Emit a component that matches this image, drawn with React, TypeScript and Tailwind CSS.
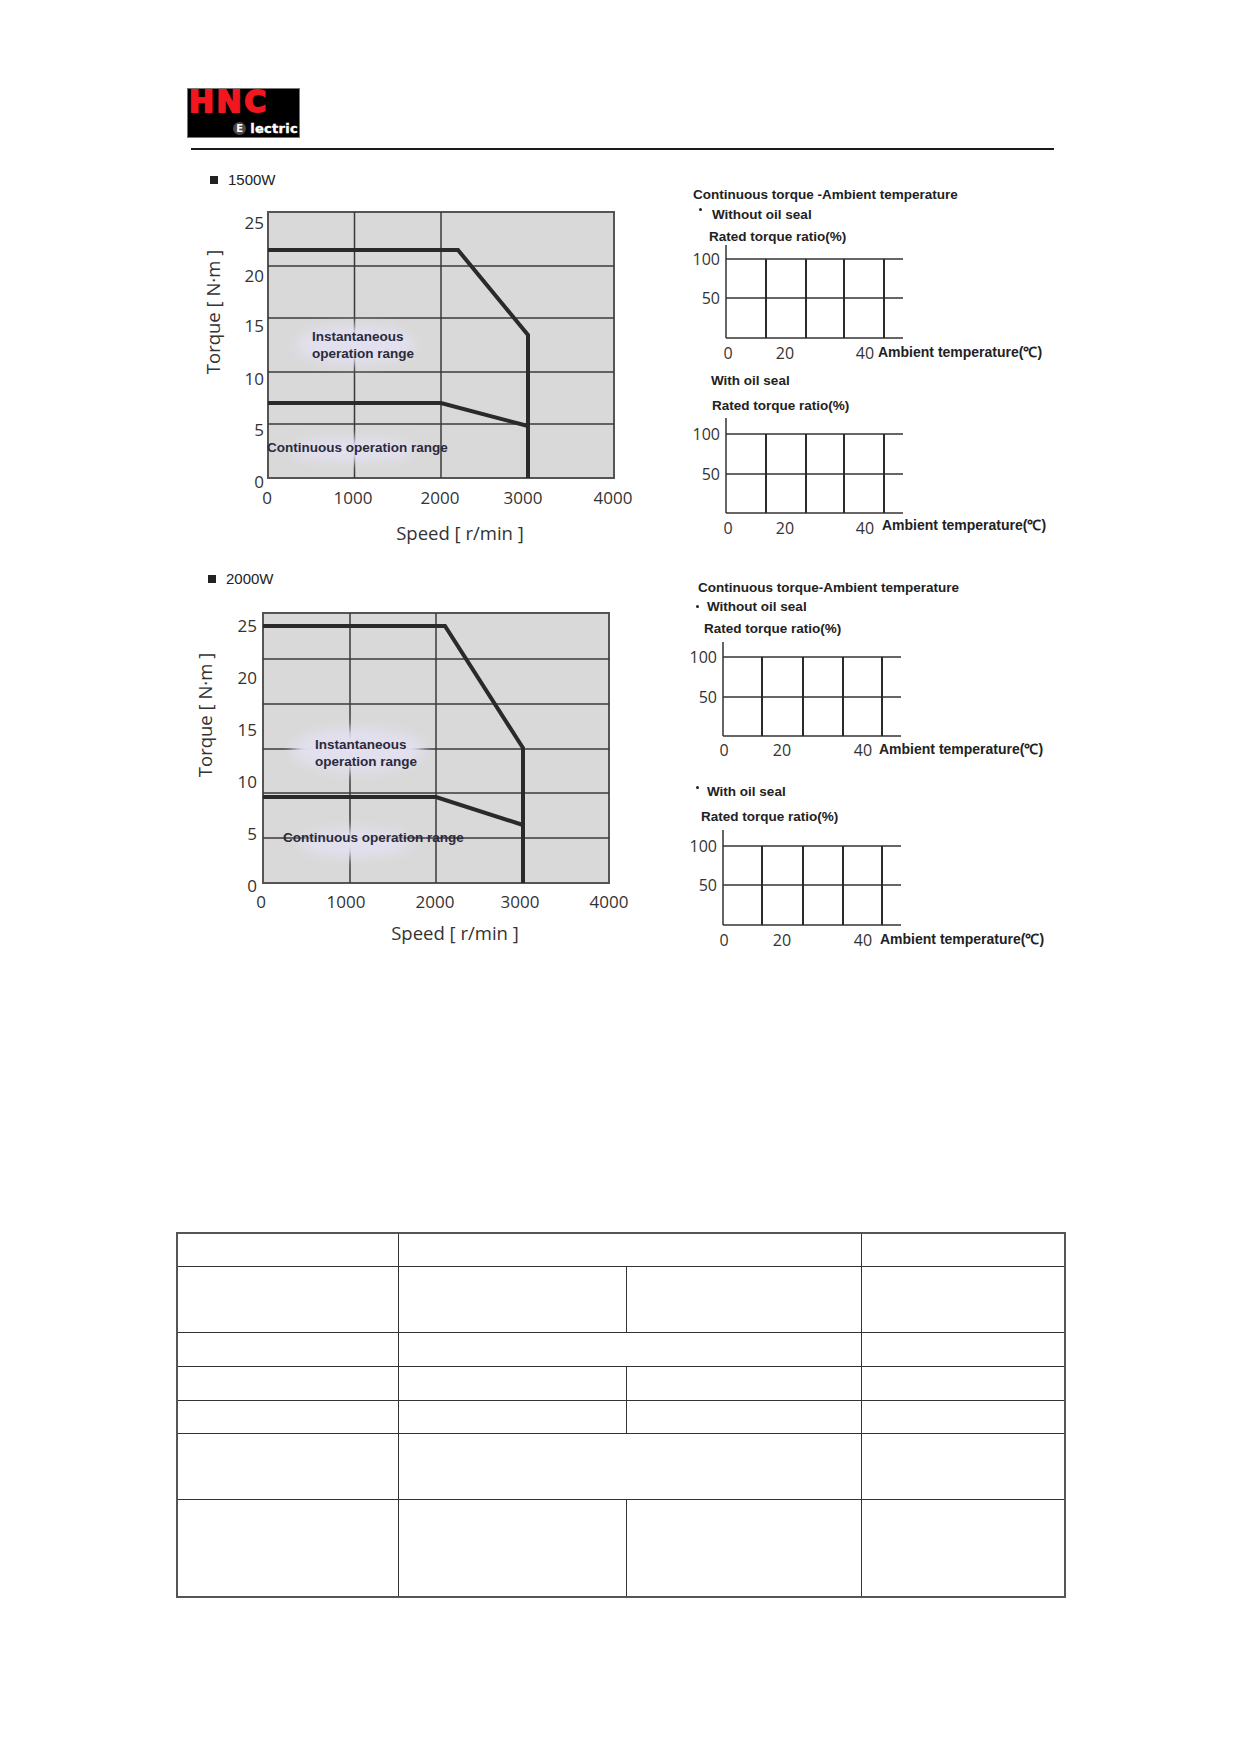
import React from "react";

type Pt = [number, number];

type TorqueProps = {
  id: string;
  vb: string;
  box: { l: number; r: number; t: number; b: number };
  vx: number[];
  hy: number[];
  inst: Pt[];
  cont: Pt[];
  yTickX: number;
  yTicks: [string, number][];
  xTickY: number;
  xTicks: [string, number][];
  speed: Pt;
  torque: Pt;
  glows: { cx: number; cy: number; rx: number; ry: number }[];
  instText: [number, number, number];
  contText: Pt;
  height: number;
};

const tickFont = { fontFamily: "'Open Sans', 'DejaVu Sans', sans-serif" };
const boldFont = { fontFamily: "'Liberation Sans', Arial, sans-serif", fontWeight: 700 };

function TorqueChart(p: TorqueProps) {
  const pts = (a: Pt[]) => a.map(([x, y]) => `${x},${y}`).join(" ");
  return (
    <svg viewBox={p.vb} width={480} height={p.height} className="block">
      <defs>
        <filter id={p.id} x="-50%" y="-50%" width="200%" height="200%">
          <feGaussianBlur stdDeviation="6" />
        </filter>
      </defs>
      <rect
        x={p.box.l}
        y={p.box.t}
        width={p.box.r - p.box.l}
        height={p.box.b - p.box.t}
        fill="#d9d9d9"
        stroke="#555"
        strokeWidth={2}
      />
      {p.vx.map((x) => (
        <line key={"v" + x} x1={x} x2={x} y1={p.box.t} y2={p.box.b} stroke="#3a3a3a" strokeWidth={1.5} />
      ))}
      {p.hy.map((y) => (
        <line key={"h" + y} x1={p.box.l} x2={p.box.r} y1={y} y2={y} stroke="#3a3a3a" strokeWidth={1.5} />
      ))}
      {p.glows.map((g, i) => (
        <ellipse key={i} cx={g.cx} cy={g.cy} rx={g.rx} ry={g.ry} fill="#e2e0ee" filter={`url(#${p.id})`} />
      ))}
      <polyline points={pts(p.inst)} fill="none" stroke="#2a2a2a" strokeWidth={4} strokeLinejoin="miter" />
      <polyline points={pts(p.cont)} fill="none" stroke="#2a2a2a" strokeWidth={4} strokeLinejoin="miter" />

      <g style={boldFont} fontSize={13.5} fill="#2a2a3c">
        <text x={p.instText[0]} y={p.instText[1]} dominantBaseline="central">
          Instantaneous
        </text>
        <text x={p.instText[0]} y={p.instText[2]} dominantBaseline="central">
          operation range
        </text>
        <text x={p.contText[0]} y={p.contText[1]} dominantBaseline="central">
          Continuous operation range
        </text>
      </g>

      <g style={tickFont} fontSize={17} fill="#333">
        {p.yTicks.map(([v, y]) => (
          <text key={v} x={p.yTickX} y={y} textAnchor="end" dominantBaseline="central">
            {v}
          </text>
        ))}
        {p.xTicks.map(([v, x]) => (
          <text key={v} x={x} y={p.xTickY} textAnchor="middle" dominantBaseline="central">
            {v}
          </text>
        ))}
        <text x={p.speed[0]} y={p.speed[1]} fontSize={18.5} textAnchor="middle" dominantBaseline="central">
          Speed [ r/min ]
        </text>
        <text
          x={p.torque[0]}
          y={p.torque[1]}
          fontSize={18.5}
          textAnchor="middle"
          dominantBaseline="central"
          transform={`rotate(-90 ${p.torque[0]} ${p.torque[1]})`}
        >
          Torque [ N·m ]
        </text>
      </g>
    </svg>
  );
}

type TempProps = {
  vb: string;
  height: number;
  ax: number;
  axisTop: number;
  vx: number[];
  hy: [number, number, number];
  right: number;
  labelRight: number;
  labelY: number;
  xLabels: number[];
  ambient: Pt;
};

function TempGrid(p: TempProps) {
  const [top, mid, bottom] = p.hy;
  return (
    <svg viewBox={p.vb} width={380} height={p.height} className="block">
      <line x1={p.ax} x2={p.ax} y1={p.axisTop} y2={bottom} stroke="#333" strokeWidth={1.5} />
      {p.hy.map((y) => (
        <line key={y} x1={p.ax} x2={p.right} y1={y} y2={y} stroke="#333" strokeWidth={1.5} />
      ))}
      {p.vx.map((x) => (
        <line key={x} x1={x} x2={x} y1={top} y2={bottom} stroke="#2a2a2a" strokeWidth={2} />
      ))}
      <g style={tickFont} fontSize={16} fill="#333">
        <text x={p.labelRight} y={top} textAnchor="end" dominantBaseline="central">
          100
        </text>
        <text x={p.labelRight} y={mid} textAnchor="end" dominantBaseline="central">
          50
        </text>
        {["0", "20", "40"].map((v, i) => (
          <text key={v} x={p.xLabels[i]} y={p.labelY} textAnchor="middle" dominantBaseline="central">
            {v}
          </text>
        ))}
      </g>
      <text
        x={p.ambient[0]}
        y={p.ambient[1]}
        style={boldFont}
        fontSize={14}
        fill="#222"
        dominantBaseline="central"
      >
        Ambient temperature(℃)
      </text>
    </svg>
  );
}

function Logo() {
  return (
    <div
      className="w-[113px] h-[50px] bg-black border border-[#777] flex flex-col"
      style={{ fontFamily: "'DejaVu Sans', sans-serif" }}
    >
      {/* HNC wordmark */}
      <div className="-mt-[2px] pl-[1px] h-[30px] text-[#f2161e] text-[30px] leading-[30px] font-bold tracking-[2.5px] [-webkit-text-stroke:1.8px_#f2161e]">
        HNC
      </div>
      <div className="flex items-center justify-end gap-[4px] pr-[1px] mt-auto mb-[2px]">
        <span className="w-[13px] h-[13px] shrink-0 rounded-full bg-[#4a4a4a] flex items-center justify-center text-white text-[10px] font-bold leading-none">
          E
        </span>
        <span className="text-white text-[13px] font-bold leading-[13px] tracking-[0.3px] [-webkit-text-stroke:0.4px_#fff]">
          lectric
        </span>
      </div>
    </div>
  );
}

function Title({ label }: { label: string }) {
  return (
    <div className="h-[20px] flex items-center text-[15px] text-[#222]">
      <span className="w-[8px] h-[8px] bg-[#222] mr-[10px]" />
      {label}
    </div>
  );
}

function Line({ children, className = "" }: { children: React.ReactNode; className?: string }) {
  return (
    <div className={`h-[17px] leading-[17px] text-[13.5px] font-bold text-[#222] whitespace-nowrap ${className}`}>
      {children}
    </div>
  );
}

const cell = "border-[1.5px] border-[#333]";

export default function App() {
  return (
    <div
      className="w-[1239px] min-h-[1752px] bg-white text-[#222]"
      style={{ fontFamily: "'Liberation Sans', Arial, sans-serif" }}
    >
      {/* header */}
      <div className="pt-[88px] pl-[187px]">
        <Logo />
      </div>
      <div className="mt-[10px] ml-[191px] w-[863px] h-[2px] bg-[#1a1a1a]" />

      {/* 1500W */}
      <div className="flex gap-[20px] pl-[180px] mt-[20px]">
        <div className="w-[480px]">
          <div className="pl-[30px]">
            <Title label="1500W" />
          </div>
          <TorqueChart
            id="g1"
            vb="180 190 480 355"
            height={355}
            box={{ l: 268, r: 614, t: 212, b: 478 }}
            vx={[354.5, 441]}
            hy={[266, 318, 372, 424]}
            inst={[
              [268, 250],
              [458, 250],
              [528, 335],
              [528, 478],
            ]}
            cont={[
              [268, 403],
              [441, 403],
              [528, 426],
            ]}
            yTickX={264}
            yTicks={[
              ["25", 222],
              ["20", 275],
              ["15", 325],
              ["10", 378],
              ["5", 429],
              ["0", 481],
            ]}
            xTickY={497}
            xTicks={[
              ["0", 267],
              ["1000", 353],
              ["2000", 440],
              ["3000", 523],
              ["4000", 613],
            ]}
            speed={[460, 532]}
            torque={[212, 312]}
            glows={[
              { cx: 355, cy: 345, rx: 60, ry: 19 },
              { cx: 352, cy: 450, rx: 62, ry: 12 },
            ]}
            instText={[312, 336, 353]}
            contText={[267, 447]}
          />
        </div>

        <div className="w-[380px] pt-[16px]">
          <Line className="pl-[13px]">Continuous torque -Ambient temperature</Line>
          <Line className="mt-[3px] pl-[20px] relative">
            <span className="absolute left-[19px] top-[2px] w-[3px] h-[3px] rounded-full bg-[#222]" />
            <span className="pl-[12px]">Without oil seal</span>
          </Line>
          <Line className="mt-[5px] pl-[29px]">Rated torque ratio(%)</Line>
          <TempGrid
            vb="680 245 380 120"
            height={120}
            ax={726}
            axisTop={245}
            vx={[766, 806, 844, 884]}
            hy={[259, 298, 338]}
            right={903}
            labelRight={720}
            labelY={353}
            xLabels={[728, 785, 865]}
            ambient={[878, 352]}
          />
          <Line className="mt-[7px] pl-[31px]">With oil seal</Line>
          <Line className="mt-[8px] pl-[32px]">Rated torque ratio(%)</Line>
          <TempGrid
            vb="680 414 380 126"
            height={126}
            ax={726}
            axisTop={418}
            vx={[766, 806, 844, 884]}
            hy={[434, 474, 513]}
            right={903}
            labelRight={720}
            labelY={528}
            xLabels={[728, 785, 865]}
            ambient={[882, 525]}
          />
        </div>
      </div>

      {/* 2000W */}
      <div className="flex gap-[20px] pl-[180px] mt-[24px]">
        <div className="w-[480px]">
          <div className="pl-[28px]">
            <Title label="2000W" />
          </div>
          <TorqueChart
            id="g2"
            vb="180 589 480 356"
            height={356}
            box={{ l: 263, r: 609, t: 613, b: 883 }}
            vx={[350, 436]}
            hy={[659, 704, 749, 793, 838]}
            inst={[
              [263, 626],
              [445, 626],
              [523, 748],
              [523, 883],
            ]}
            cont={[
              [263, 797],
              [436, 797],
              [523, 825],
            ]}
            yTickX={257}
            yTicks={[
              ["25", 625],
              ["20", 677],
              ["15", 729],
              ["10", 781],
              ["5", 833],
              ["0", 885],
            ]}
            xTickY={901}
            xTicks={[
              ["0", 261],
              ["1000", 346],
              ["2000", 435],
              ["3000", 520],
              ["4000", 609],
            ]}
            speed={[455, 932]}
            torque={[204, 715]}
            glows={[
              { cx: 358, cy: 750, rx: 66, ry: 22 },
              { cx: 355, cy: 843, rx: 56, ry: 14 },
            ]}
            instText={[315, 744, 761]}
            contText={[283, 837]}
          />
        </div>

        <div className="w-[380px] pt-[10px]">
          <Line className="pl-[18px]">Continuous torque-Ambient temperature</Line>
          <Line className="mt-[2px] relative">
            <span className="absolute left-[16px] top-[7px] w-[3px] h-[3px] rounded-full bg-[#222]" />
            <span className="pl-[27px]">Without oil seal</span>
          </Line>
          <Line className="mt-[5px] pl-[24px]">Rated torque ratio(%)</Line>
          <TempGrid
            vb="680 637 380 128"
            height={128}
            ax={723}
            axisTop={642}
            vx={[762, 803, 843, 882]}
            hy={[657, 697, 736]}
            right={901}
            labelRight={717}
            labelY={750}
            xLabels={[724, 782, 863]}
            ambient={[879, 749]}
          />
          <Line className="mt-[18px] relative">
            <span className="absolute left-[16px] top-[3px] w-[3px] h-[3px] rounded-full bg-[#222]" />
            <span className="pl-[27px]">With oil seal</span>
          </Line>
          <Line className="mt-[8px] pl-[21px]">Rated torque ratio(%)</Line>
          <TempGrid
            vb="680 825 380 130"
            height={130}
            ax={723}
            axisTop={830}
            vx={[762, 803, 843, 882]}
            hy={[846, 885, 925]}
            right={901}
            labelRight={717}
            labelY={940}
            xLabels={[724, 782, 863]}
            ambient={[880, 939]}
          />
        </div>
      </div>

      {/* blank spec table */}
      <table className="table-fixed border-collapse w-[888px] ml-[176px] mt-[277px] border-2 border-[#555]">
        <colgroup>
          <col className="w-[221px]" />
          <col className="w-[228px]" />
          <col className="w-[235px]" />
          <col className="w-[204px]" />
        </colgroup>
        <tbody>
          <tr className="h-[33px]">
            <td className={cell} />
            <td className={cell} colSpan={2} />
            <td className={cell} />
          </tr>
          <tr className="h-[66px]">
            <td className={cell} />
            <td className={cell} />
            <td className={cell} />
            <td className={cell} />
          </tr>
          <tr className="h-[34px]">
            <td className={cell} />
            <td className={cell} colSpan={2} />
            <td className={cell} />
          </tr>
          <tr className="h-[34px]">
            <td className={cell} />
            <td className={cell} />
            <td className={cell} />
            <td className={cell} />
          </tr>
          <tr className="h-[33px]">
            <td className={cell} />
            <td className={cell} />
            <td className={cell} />
            <td className={cell} />
          </tr>
          <tr className="h-[66px]">
            <td className={cell} />
            <td className={cell} colSpan={2} />
            <td className={cell} />
          </tr>
          <tr className="h-[98px]">
            <td className={cell} />
            <td className={cell} />
            <td className={cell} />
            <td className={cell} />
          </tr>
        </tbody>
      </table>
    </div>
  );
}
